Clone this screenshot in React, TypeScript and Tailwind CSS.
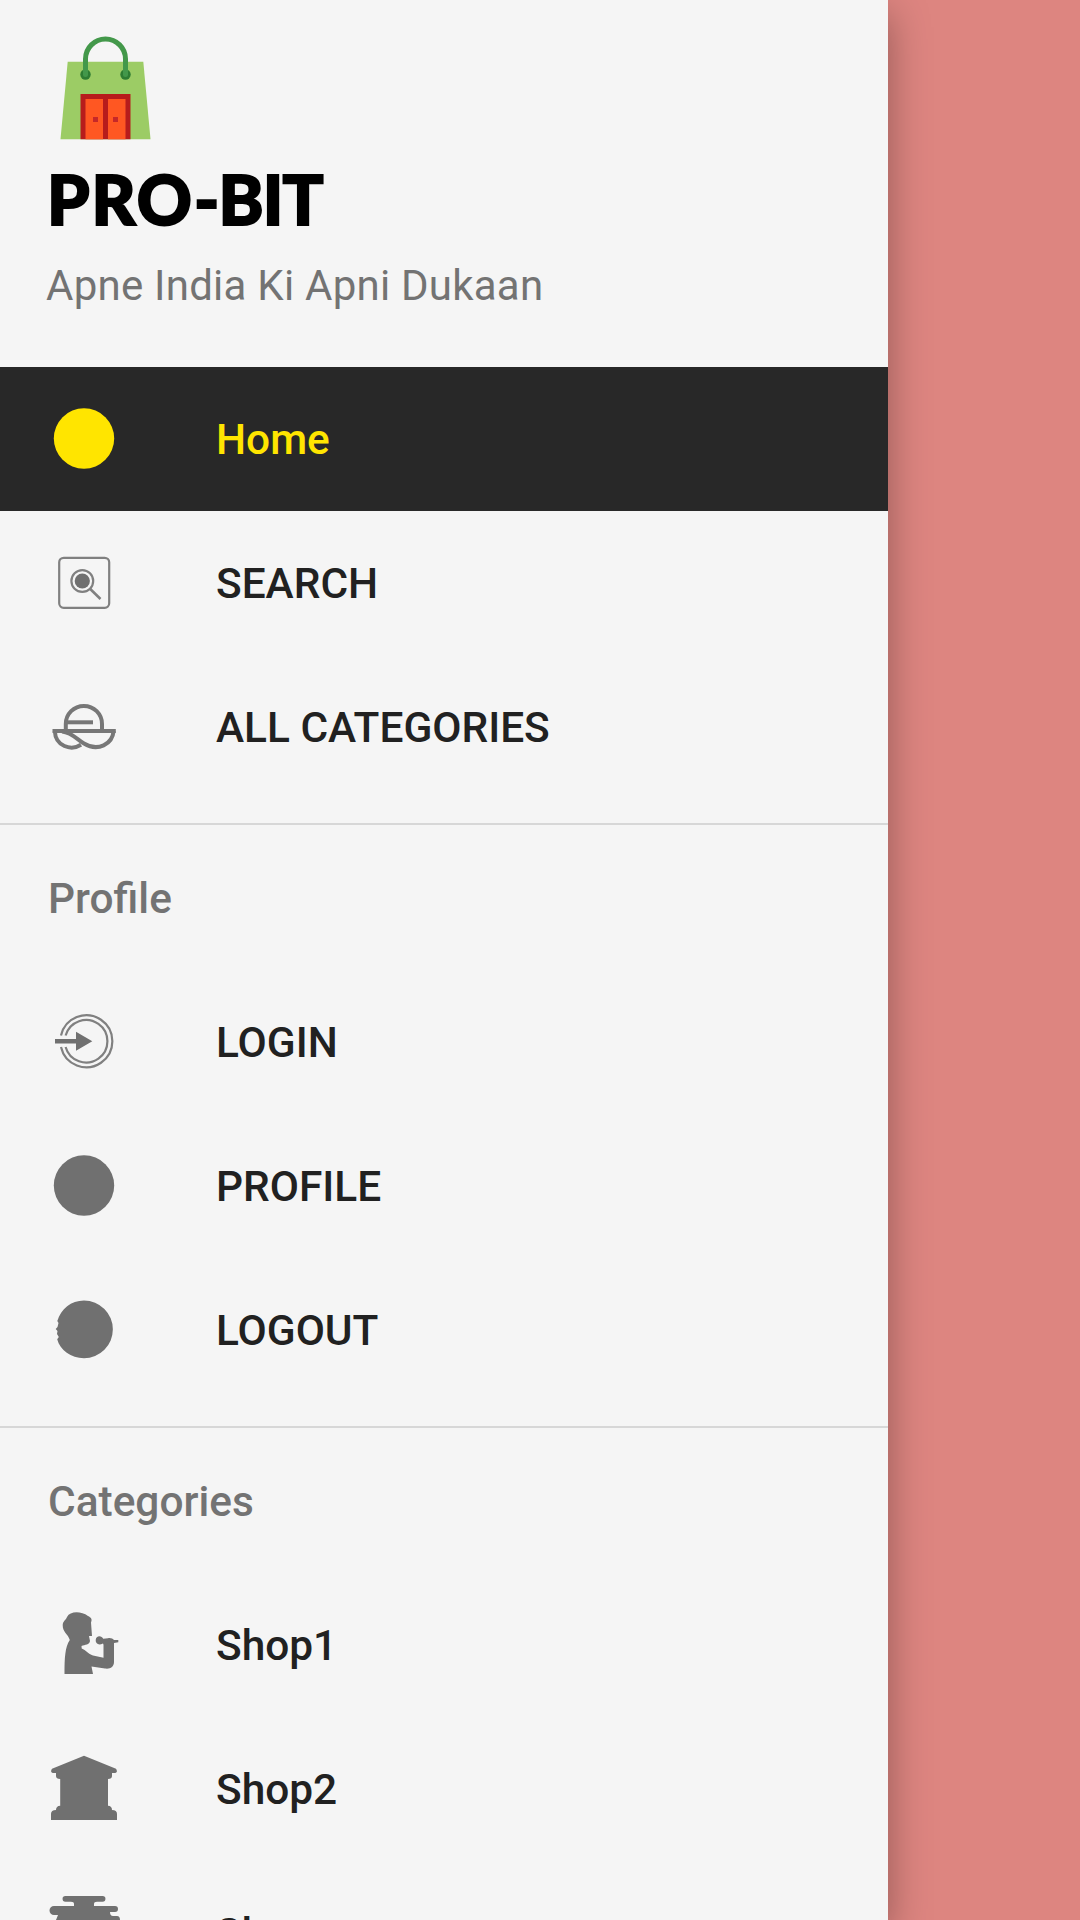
import type { ReactNode } from "react";

const G = "#707070";

function BagLogo() {
  return (
    <svg width="114" height="114" viewBox="48 30 114 114" className="block">
      <path d="M67.7 61.7H143.3L150.5 139.3H60.5Z" fill="#9ccc65" />
      <circle cx="85.5" cy="74.5" r="5.2" fill="#2e7d32" />
      <circle cx="125.5" cy="74.5" r="5.2" fill="#2e7d32" />
      <path d="M85.5 74.5V59A20 20 0 0 1 125.5 59V74.5" fill="none" stroke="#43984a" strokeWidth="5" strokeLinecap="round" />
      <path d="M80.5 94H130.5V139.3H80.5Z" fill="#b71c1c" />
      <path d="M85.5 99H103V139.3H85.5ZM108 99H125.5V139.3H108Z" fill="#ff5722" />
      <path d="M93 117H98V122H93ZM113 117H118V122H113Z" fill="#c62828" />
    </svg>
  );
}

function Icon({ children, y }: { children: ReactNode; y: number }) {
  return (
    <svg width="72" height="72" viewBox={`48 ${y} 72 72`} className="block shrink-0 overflow-visible">
      {children}
    </svg>
  );
}

const SearchIcon = (
  <Icon y={547}>
    <g stroke="#808080">
      <rect x="59.2" y="557.8" width="50" height="50" rx="4.5" fill="none" strokeWidth="2.2" />
      <circle cx="82.3" cy="581" r="10.9" fill="none" strokeWidth="2.2" />
      <path d="M90 588.8L100.5 599" strokeWidth="2.6" />
    </g>
    <circle cx="82.3" cy="581" r="7.6" fill={G} />
  </Icon>
);

const BowlIcon = (
  <Icon y={691}>
    <g fill="none" stroke="#777777" strokeWidth="4">
      <path d="M65.8 730V724A18.1 18.1 0 0 1 102 724V730" />
      <path d="M67 722.3H93" />
      <path d="M52.5 731H115.8" />
      <path d="M54.8 731C55.5 746.5 71 751 81 744.8" />
      <path d="M62 731.5C72 732.5 77 739.5 84 743.5C98 752 112.5 744 113.6 731" />
    </g>
  </Icon>
);

const LoginIcon = (
  <Icon y={1006}>
    <g fill="none" stroke="#808080" strokeWidth="2.2">
      <path d="M61 1035.5A26 26 0 1 1 61 1047" />
      <path d="M65.6 1035.5A21.3 21.3 0 1 1 65.6 1047" />
    </g>
    <path d="M55 1039H76V1031.8L92.3 1041.3L76 1050.8V1043.4H55Z" fill={G} />
  </Icon>
);

const LogoutIcon = (
  <Icon y={1294}>
    <path d="M57.3 1321C61 1309 71 1300.5 84 1300.5A28.8 28.8 0 0 1 84 1358.2C71 1358.2 60 1350 57.2 1339.3L58.8 1337L57 1334L57.5 1331L55.7 1329L57.5 1327L58.5 1323Z" fill={G} />
  </Icon>
);

const SingerIcon = (
  <Icon y={1609}>
    <path d="M64.5 1674C64.5 1658 65 1647 69.8 1640C68 1634 62.5 1632 62.7 1625C63 1621 65.5 1620.5 67 1617C70 1611 81 1611 88 1616C91 1617.5 92.5 1619 91 1622.5L92 1636H89L90 1641C89.5 1645 85 1644.5 81.5 1646L81.7 1648.5C86 1650 88 1654 93 1655.5L103.5 1657.7V1644.8L103 1643.5C98 1646 95.5 1643 95.7 1640C96 1635 102 1635.5 103.2 1638.8L108 1638.2C110 1637.5 113 1638.5 114 1640L118.3 1640V1642.3L114 1643V1662C114 1667 110 1669.3 105 1668.5L91.5 1666.5L93 1674Z" fill={G} />
  </Icon>
);

const MuseumIcon = (
  <Icon y={1753}>
    <path d="M84 1755.8L116 1768.8Q118.5 1773 114 1773H112V1776Q112 1779 108 1779V1805.8Q112 1806 112 1810Q117 1810 117 1814V1820H51V1814Q51 1810 56 1810Q56 1806 60.2 1805.8V1779Q56 1779 56 1776V1773H54Q49.5 1773 52 1768.8Z" fill={G} />
  </Icon>
);

const BurgerIcon = (
  <Icon y={1897}>
    <path d="M65.4 1896H102.6A2.8 2.8 0 0 1 102.6 1901.7H97Q94 1901.7 94 1904V1906H115A2.8 2.8 0 0 1 115 1912H110Q110 1916 113 1916H117Q120 1916 120 1920V1930H56V1920L58 1915H54A4.4 4.4 0 0 1 54 1906H74V1904Q74 1901.7 71 1901.7H65.4A2.8 2.8 0 0 1 65.4 1896Z" fill={G} />
  </Icon>
);

const dot = (color: string) => (
  <Icon y={403}>
    <circle cx="84" cy="438.5" r="30.2" fill={color} />
  </Icon>
);

function Item({ icon, label, active }: { icon: ReactNode; label: string; active?: boolean }) {
  return (
    <li className={active ? "flex h-36 items-center bg-[#282828] pl-12 text-[#ffe500]" : "flex h-36 items-center pl-12 text-[#212121]"}>
      {icon}
      <span className="ml-24 pt-0.5 text-[42.4px] leading-[50px] font-medium whitespace-nowrap">{label}</span>
    </li>
  );
}

function Group({ title, children }: { title: string; children: ReactNode }) {
  return (
    <section className="mt-6 border-t-2 border-[#d7d7d7] pt-px">
      <h2 className="flex h-36 items-center pt-0.5 pl-12 text-[42.4px] leading-[50px] font-medium text-[#737373]">{title}</h2>
      <ul>{children}</ul>
    </section>
  );
}

export default function App() {
  return (
    <div className="h-[1920px] w-full overflow-hidden bg-[#dd8580] font-['Roboto',sans-serif]">
      <aside className="flex h-full w-[888px] flex-col bg-[#f5f5f5] shadow-[0_14px_38px_rgba(0,0,0,0.34)]">
        <header className="h-[367px] shrink-0 pt-[30px] pl-[46px]">
          <div className="pl-0.5"><BagLogo /></div>
          <h1 className="mt-3 h-[86px] pl-px font-['Lato',sans-serif] text-[68px] leading-[86px] font-black whitespace-nowrap text-black [-webkit-text-stroke:2px_black]">
            <span className="tracking-[1.9px]">PRO</span>
            <span className="tracking-[-0.8px]">-BIT</span>
          </h1>
          <p className="mt-[19px] text-[42px] leading-[50px] tracking-[0.24px] whitespace-nowrap text-[#737373]">Apne India Ki Apni Dukaan</p>
        </header>
        <nav>
          <ul>
            <Item icon={dot("#ffe500")} label="Home" active />
            <Item icon={SearchIcon} label="SEARCH" />
            <Item icon={BowlIcon} label="ALL CATEGORIES" />
          </ul>
          <Group title="Profile">
            <Item icon={LoginIcon} label="LOGIN" />
            <Item icon={dot(G)} label="PROFILE" />
            <Item icon={LogoutIcon} label="LOGOUT" />
          </Group>
          <Group title="Categories">
            <Item icon={SingerIcon} label="Shop1" />
            <Item icon={MuseumIcon} label="Shop2" />
            <Item icon={BurgerIcon} label="Shop" />
          </Group>
        </nav>
      </aside>
    </div>
  );
}
